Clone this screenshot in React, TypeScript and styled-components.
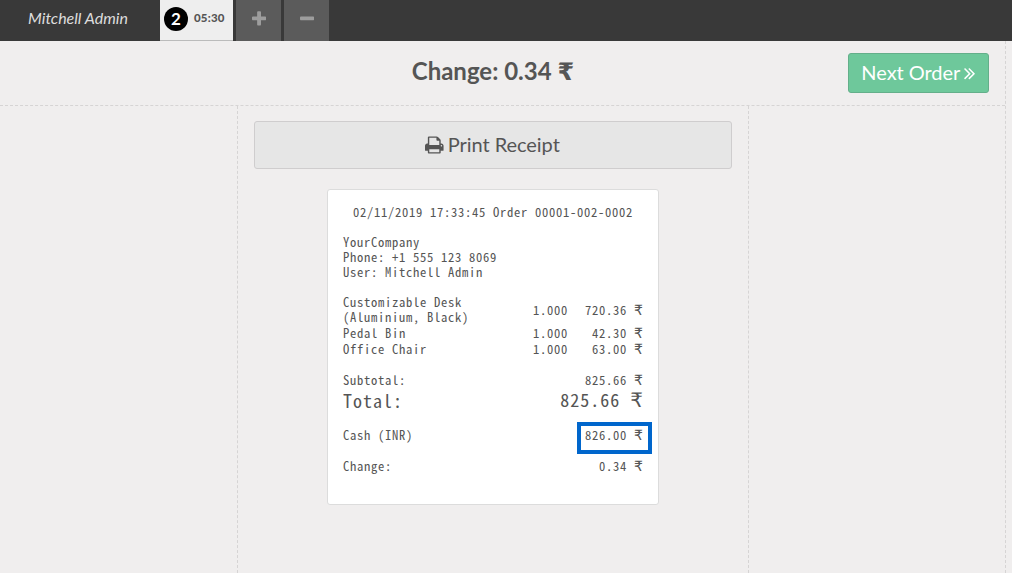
import React from "react";
import styled, { createGlobalStyle } from "styled-components";

const Global = createGlobalStyle`
  * { box-sizing: border-box; }
  body { margin: 0; background: #f0eeee; color: #555; font-family: Lato, "DejaVu Sans", sans-serif; overflow: hidden; }
  button { font-family: inherit; color: inherit; margin: 0; }
`;
const Page = styled.div`
  width: 1012px; height: 573px; display: flex; flex-direction: column;
`;
const TopBar = styled.header`
  height: 41px; flex: none; display: flex; background: #393939;
`;
const UserName = styled.div`
  width: 160px; padding-left: 28px; font-size: 16px; line-height: 36px; font-style: italic; color: #ddd;
`;
const OrderTab = styled.div`
  width: 73px; height: 41px; padding-left: 4px; display: flex; gap: 6px; align-items: center;
  padding-bottom: 2px; background: #eee; border-bottom: 1px solid #bbb;
`;
const OrderNumber = styled.span`
  width: 24px; height: 24px; border-radius: 50%; background: #000; color: #fff;
  font-size: 17px; font-weight: 700; line-height: 24px; text-align: center;
`;
const OrderTime = styled.span`
  font-size: 11.5px; font-weight: 900; line-height: 18px; padding-bottom: 2px; letter-spacing: 0.2px;
`;
const SquareButton = styled.button`
  width: 45px; height: 41px; margin-left: 3px; padding: 0 0 4px 1px; border: 0; background: #5b5b5b; color: #9d9d9d;
  display: flex; align-items: center; justify-content: center;
`;
const Screen = styled.main`
  width: 1006px; flex: 1; display: flex; flex-direction: column; border-right: 1px dashed #d6d4d4;
`;
const ScreenTop = styled.div`
  height: 65px; flex: none; border-bottom: 1px dashed #d6d4d4; display: grid;
  grid-template-columns: 237px 512px 1fr;
`;
const ChangeTitle = styled.h1`
  grid-column: 2; margin: 0; font-size: 24px; line-height: 59px; text-align: center; font-weight: 700;
`;
const NextButton = styled.button`
  justify-self: end; margin: 12px 16px 0 0; width: 141px; height: 40px; padding: 0;
  display: flex; align-items: center; justify-content: center; gap: 4px;
  border: 1px solid #64af8a; border-radius: 3px; background: #6ec89b; color: #fff; font-size: 20px;
`;
const Center = styled.section`
  width: 512px; margin-left: 237px; flex: 1; padding: 15px 16px 0;
  border: dashed #d6d4d4; border-width: 0 1px;
`;
const PrintButton = styled.button`
  width: 478px; height: 48px; padding: 0 1px 0 0; display: flex; align-items: center; justify-content: center; gap: 4px;
  border: 1px solid #cfcdce; border-radius: 3px; background: #e6e6e6; font-size: 20px;
`;
const Label = styled.span`
  padding-bottom: 2px; letter-spacing: -0.05px;
`;
const Ticket = styled.article`
  width: 332px; height: 316px; margin: 20px auto 0; padding: 14px 15px; background: #fff;
  border: 1px solid #dcdcdc; border-radius: 3px;
  font-family: "Noto Sans Mono CJK SC", "Liberation Mono", monospace;
  font-size: 12.6px; letter-spacing: 0.7px; line-height: 15px;
`;
const OrderLine = styled.div`
  text-align: center; margin-bottom: 15px; white-space: pre;
`;
const Quantity = styled.span`
  text-align: right;
`;
const Amount = styled.span`
  grid-column-end: -1; text-align: right; white-space: pre;
`;
const Row = styled.div<{ $height?: number; $gap?: number; $big?: boolean; $twoLines?: boolean }>`
  display: grid; grid-template-columns: ${(p) => (p.$big ? "80px 1fr" : "155px 70px 1fr")}; align-items: center;
  height: ${(p) => p.$height ?? 16}px; margin-top: ${(p) => p.$gap ?? 0}px;
  font-size: ${(p) => (p.$big ? "18px" : "12.6px")}; letter-spacing: ${(p) => (p.$big ? "1px" : "0.7px")};
  ${Quantity}, ${Amount} { padding-top: ${(p) => (p.$twoLines ? 2 : 0)}px; }
`;
const Rupee = styled.span`
  font-family: "DejaVu Sans", sans-serif; line-height: 1; letter-spacing: 0;
  ${Amount} & { font-size: 1.111em; }
`;
const Highlight = styled.div`
  position: absolute; left: 577px; top: 422px; width: 75px; height: 32px; border: 4px solid #0066cc;
`;

type IconProps = { size: number; width: number; d: string };
const Icon = ({ size, width, d }: IconProps) => (
  <svg width={(width / 1792) * size} height={size} viewBox={`0 0 ${width} 1792`} fill="currentColor">
    <path d={d} />
  </svg>
);
const PLUS = "M1408 736v192q0 40-28 68t-68 28h-416v416q0 40-28 68t-68 28h-192q-40 0-68-28t-28-68v-416h-416q-40 0-68-28t-28-68v-192q0-40 28-68t68-28h416v-416q0-40 28-68t68-28h192q40 0 68 28t28 68v416h416q40 0 68 28t28 68z";
const MINUS = "M1408 736v192q0 40-28 68t-68 28h-1216q-40 0-68-28t-28-68v-192q0-40 28-68t68-28h1216q40 0 68 28t28 68z";
const PRINT = "M384 1536h896v-256h-896v256zM384 896h896v-384h-160q-40 0-68-28t-28-68v-160h-640v640zM1536 960q0-26-19-45t-45-19-45 19-19 45 19 45 45 19 45-19 19-45zM1664 960v416q0 13-9.5 22.5t-22.5 9.5h-224v160q0 40-28 68t-68 28h-960q-40 0-68-28t-28-68v-160h-224q-13 0-22.5-9.5t-9.5-22.5v-416q0-79 56.5-135.5t135.5-56.5h64v-544q0-40 28-68t68-28h672q40 0 88 20t76 48l152 152q28 28 48 76t20 88v256h64q79 0 135.5 56.5t56.5 135.5z";
const FORWARD = "M595 960q0 13-10 23l-466 466q-10 10-23 10t-23-10l-50-50q-10-10-10-23t10-23l393-393-393-393q-10-10-10-23t10-23l50-50q10-10 23-10t23 10l466 466q10 10 10 23zm384 0q0 13-10 23l-466 466q-10 10-23 10t-23-10l-50-50q-10-10-10-23t10-23l393-393-393-393q-10-10-10-23t10-23l50-50q10-10 23-10t23 10l466 466q10 10 10 23z";

const Money = ({ value }: { value: string }) => (
  <Amount>{value} <Rupee>₹</Rupee></Amount>
);

export default function App() {
  return (
    <Page>
      <Global />
      <TopBar>
        <UserName>Mitchell Admin</UserName>
        <OrderTab><OrderNumber>2</OrderNumber><OrderTime>05:30</OrderTime></OrderTab>
        <SquareButton aria-label="New order"><Icon size={18} width={1408} d={PLUS} /></SquareButton>
        <SquareButton aria-label="Delete order"><Icon size={18} width={1408} d={MINUS} /></SquareButton>
      </TopBar>
      <Screen>
        <ScreenTop>
          <ChangeTitle>Change: 0.34 <Rupee>₹</Rupee></ChangeTitle>
          <NextButton><Label>Next Order</Label><Icon size={20} width={1024} d={FORWARD} /></NextButton>
        </ScreenTop>
        <Center>
          <PrintButton><Icon size={20} width={1664} d={PRINT} /><Label>Print Receipt</Label></PrintButton>
          <Ticket>
            <OrderLine>02/11/2019 17:33:45 Order 00001-002-0002</OrderLine>
            <div>YourCompany</div>
            <div>Phone: +1 555 123 8069</div>
            <div>User: Mitchell Admin</div>
            <Row $gap={14} $height={31} $twoLines>
              <span>Customizable Desk (Aluminium, Black)</span><Quantity>1.000</Quantity><Money value="720.36" />
            </Row>
            <Row><span>Pedal Bin</span><Quantity>1.000</Quantity><Money value="42.30" /></Row>
            <Row><span>Office Chair</span><Quantity>1.000</Quantity><Money value="63.00" /></Row>
            <Row $gap={15}><span>Subtotal:</span><Money value="825.66" /></Row>
            <Row $big $height={26}><span>Total:</span><Money value="825.66" /></Row>
            <Row $gap={13}><span>Cash (INR)</span><Money value="826.00" /></Row>
            <Row $gap={15}><span>Change:</span><Money value="0.34" /></Row>
          </Ticket>
        </Center>
      </Screen>
      <Highlight />
    </Page>
  );
}
